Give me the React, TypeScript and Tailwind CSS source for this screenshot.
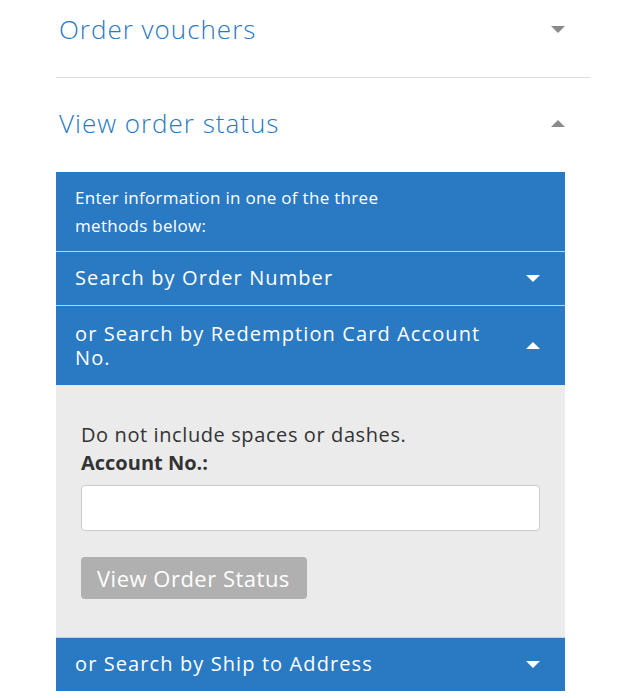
import React, { useState } from 'react';

function Caret({ up, white }: { up?: boolean; white?: boolean }) {
  return (
    <svg width="14" height="7" viewBox="0 0 14 7" className="shrink-0">
      <polygon
        points={up ? '0,7 14,7 7,0' : '0,0 14,0 7,7'}
        fill={white ? '#ffffff' : '#8a8a8a'}
      />
    </svg>
  );
}

function SubRow({
  label,
  open,
  tall,
  onClick,
}: {
  label: string;
  open: boolean;
  tall?: boolean;
  onClick: () => void;
}) {
  return (
    <button
      type="button"
      onClick={onClick}
      className="flex w-full items-center justify-between border-t border-[#b9d3ec] bg-[#2a79c3] pl-[19px] pr-[25px] text-left"
    >
      <span
        className={
          tall
            ? 'max-w-[435px] pt-[16px] pb-[15px] text-[20px] leading-[24px] tracking-[1.1px] text-white'
            : 'max-w-[435px] pt-[14px] pb-[15px] text-[20px] leading-[24px] tracking-[1.1px] text-white'
        }
      >
        {label}
      </span>
      <Caret up={open} white />
    </button>
  );
}

export default function App() {
  const [openMethod, setOpenMethod] = useState<number>(1);
  const [account, setAccount] = useState('');

  const toggle = (i: number) => setOpenMethod(openMethod === i ? -1 : i);

  return (
    <div className="min-h-[698px] bg-white pl-[56px] pr-[30px] font-['Open_Sans',sans-serif]">
      <div className="flex h-[78px] items-center justify-between border-b border-[#dcdcdc] pb-[18px] pl-[3px] pr-[25px]">
        <h2 className="text-[26px] font-light tracking-[1px] text-[#2a79c3]">Order vouchers</h2>
        <Caret />
      </div>

      <div className="flex h-[94px] items-center justify-between pb-[4px] pl-[3px] pr-[25px]">
        <h2 className="text-[26px] font-light tracking-[1px] text-[#2a79c3]">View order status</h2>
        <Caret up />
      </div>

      <div className="w-[509px]">
        <div className="bg-[#2a79c3] px-[19px] pt-[12px] pb-[11px] text-[17px] leading-[28px] tracking-[0.3px] text-white">
          Enter information in one of the three
          <br />
          methods below:
        </div>

        <SubRow label="Search by Order Number" open={openMethod === 0} onClick={() => toggle(0)} />
        <SubRow
          label="or Search by Redemption Card Account No."
          open={openMethod === 1}
          tall
          onClick={() => toggle(1)}
        />

        {openMethod === 1 && (
          <div className="bg-[#ebebeb] px-[25px] pt-[36px] pb-[38px]">
            <p className="text-[20px] leading-[28px] tracking-[0.6px] text-[#333]">
              Do not include spaces or dashes.
            </p>
            <label className="block text-[20px] font-bold leading-[28px] text-[#333]">Account No.:</label>
            <input
              type="text"
              value={account}
              onChange={(e) => setAccount(e.target.value)}
              className="mt-[8px] block h-[46px] w-[459px] rounded-[4px] border border-[#cccccc] bg-white px-3 text-[18px] outline-none"
            />
            <button
              type="button"
              disabled={account.length === 0}
              className="mt-[26px] h-[42px] w-[226px] rounded-[4px] bg-[#b0b0b0] px-[16px] text-left text-[22px] tracking-[0.5px] text-white"
            >
              View Order Status
            </button>
          </div>
        )}

        <SubRow label="or Search by Ship to Address" open={openMethod === 2} onClick={() => toggle(2)} />
      </div>
    </div>
  );
}
